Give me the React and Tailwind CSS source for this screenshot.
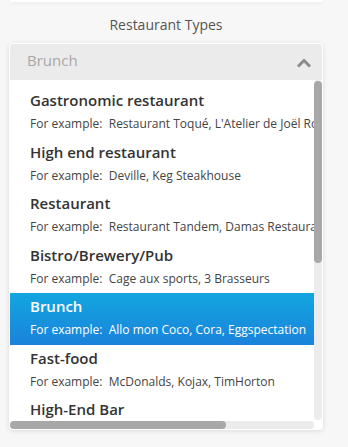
import React from 'react';

const types = [
  { name: 'Gastronomic restaurant', examples: "Restaurant Toqué, L'Atelier de Joël Robuchon" },
  { name: 'High end restaurant', examples: 'Deville, Keg Steakhouse' },
  { name: 'Restaurant', examples: 'Restaurant Tandem, Damas Restaurant' },
  { name: 'Bistro/Brewery/Pub', examples: 'Cage aux sports, 3 Brasseurs' },
  { name: 'Brunch', examples: 'Allo mon Coco, Cora, Eggspectation' },
  { name: 'Fast-food', examples: 'McDonalds, Kojax, TimHorton' },
  { name: 'High-End Bar', examples: 'Le Mal Nécessaire, Atwater Cocktail Club' }
];

const selected = 'Brunch';

const TypeOption = ({ type }) => {
  const isSelected = type.name === selected;
  return (
    <li
      className={
        isSelected
          ? 'h-[51.5px] pl-[20px] pt-[3px] bg-gradient-to-b from-[#13a6e0] to-[#1b82db] text-white'
          : 'h-[51.5px] pl-[20px] pt-[3px] text-[#333]'
      }
    >
      <p className="text-[15px] leading-[20px] font-semibold whitespace-nowrap">{type.name}</p>
      <p
        className={
          isSelected
            ? 'mt-[6px] text-[12px] leading-[16px] whitespace-pre text-white'
            : 'mt-[6px] text-[12px] leading-[16px] whitespace-pre text-[#444]'
        }
      >
        {'For example:  ' + type.examples}
      </p>
    </li>
  );
};

export default function App() {
  return (
    <div className="min-h-screen bg-[#f7f7f7] font-['Open_Sans',sans-serif]">
      <div className="ml-[10px] w-[313px] h-[2px] bg-white rounded-b shadow-[0_1px_4px_rgba(0,0,0,0.08)]" />

      <h2 className="mt-[13px] text-center pr-[16px] text-[14px] leading-[20px] text-[#555]">
        Restaurant Types
      </h2>

      <div className="mt-[8px] ml-[9px] w-[314px] p-[1px] bg-white rounded-[4px] shadow-[0_1px_5px_rgba(0,0,0,0.12)]">
        <header className="h-[36px] flex items-center justify-between pl-[17px] pr-[10px] bg-[#ebebeb] rounded-t-[3px]">
          <span className="-mt-[3px] text-[15px] text-[#a8a8a8]">Brunch</span>
          <svg width="16" height="12" viewBox="0 0 16 12" className="mt-[2px]">
            <polyline
              points="2,9.5 8,3.5 14,9.5"
              fill="none"
              stroke="#8c8c8c"
              strokeWidth="3"
            />
          </svg>
        </header>

        <div className="flex">
          <div className="w-[304px] h-[341px] overflow-hidden">
            <ul className="pt-[7px] w-[430px]">
              {types.map((type) => (
                <TypeOption key={type.name} type={type} />
              ))}
            </ul>
          </div>
          <div className="w-[8px] h-[340px] bg-[#ececec] rounded-full">
            <div className="mt-[1px] h-[182px] bg-[#a8a8a8] rounded-full" />
          </div>
        </div>

        <div className="flex">
          <div className="w-[304px] h-[8px] bg-[#ececec] rounded-full">
            <div className="w-[216px] h-[8px] bg-[#a8a8a8] rounded-full" />
          </div>
          <div className="w-[8px] h-[8px] bg-white" />
        </div>
      </div>
    </div>
  );
}
